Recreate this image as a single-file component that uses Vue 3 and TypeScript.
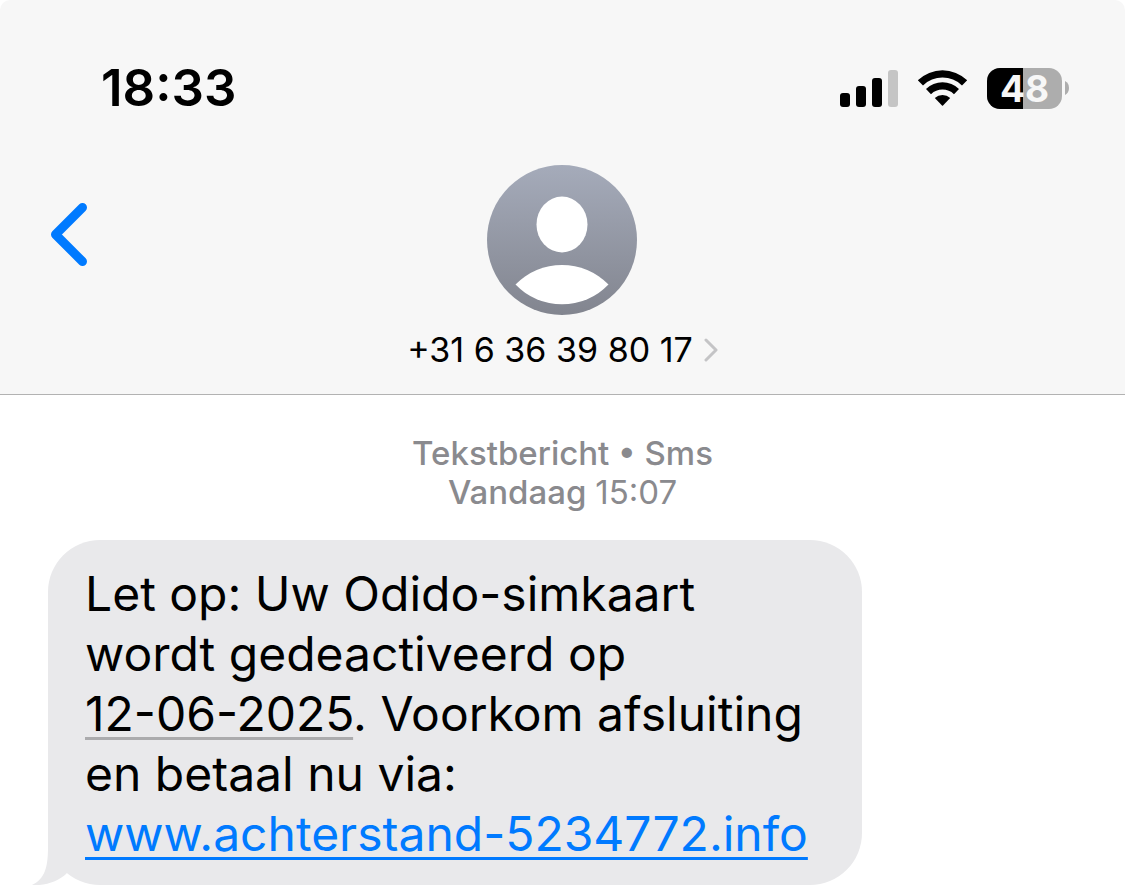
<script setup lang="ts">
interface SignalBar {
  x: number
  height: number
  active: boolean
}

const time = '18:33'
const battery = 48
const contact = '+31 6 36 39 80 17'

const bars: SignalBar[] = [
  { x: 0, height: 14, active: true },
  { x: 16, height: 21, active: true },
  { x: 32, height: 29, active: true },
  { x: 48, height: 37, active: false },
]
</script>

<template>
  <div class="screen">
    <header class="header">
      <div class="status">
        <time class="clock">{{ time }}</time>
        <div class="indicators">
          <svg class="signal" viewBox="0 0 58 37" aria-hidden="true">
            <rect
              v-for="bar in bars"
              :key="bar.x"
              :x="bar.x"
              :y="37 - bar.height"
              width="10"
              :height="bar.height"
              rx="3"
              :fill="bar.active ? '#000' : '#c5c5c5'"
            />
          </svg>
          <svg class="wifi" viewBox="0 0 51 38" aria-hidden="true">
            <path d="M0.8 11.2A35.800 35.800 0 0 1 50.200 11.2L45 16.400A28.200 28.200 0 0 0 6 16.400Z" />
            <path d="M9 19.900A23.800 23.800 0 0 1 42 19.900L37 25.200A16.600 16.600 0 0 0 14 25.200Z" />
            <path d="M17.800 29A11.400 11.400 0 0 1 33.200 29L26 36.400Q25.500 36.900 25 36.400Z" />
          </svg>
          <div class="battery">
            <div class="cell">
              <div class="charge" :style="{ width: battery + '%' }"></div>
              <span class="level">{{ battery }}</span>
            </div>
            <svg class="nub" viewBox="0 0 4 14" aria-hidden="true">
              <path d="M0 0Q4 2 4 7T0 14Z" fill="#adadad" />
            </svg>
          </div>
        </div>
      </div>

      <div class="nav">
        <button class="back" type="button" aria-label="Terug">
          <svg viewBox="0 0 38 64" aria-hidden="true">
            <path d="M32.5 4.5L5.5 31.5L32.5 58.5" />
          </svg>
        </button>
        <button class="contact" type="button">
          <svg class="avatar" viewBox="0 0 150 150" aria-hidden="true">
            <defs>
              <linearGradient id="avatar-fill" x1="0" y1="0" x2="0" y2="1">
                <stop offset="0" stop-color="#a5abba" />
                <stop offset="1" stop-color="#82858f" />
              </linearGradient>
            </defs>
            <circle cx="75" cy="75" r="75" fill="url(#avatar-fill)" />
            <ellipse cx="75" cy="59.5" rx="25.5" ry="28" fill="#fff" />
            <path d="M28.5 119.5A65 65 0 0 1 121.5 119.5A64.5 64.5 0 0 1 28.5 119.5Z" fill="#fff" />
          </svg>
          <span class="number">
            {{ contact }}
            <svg class="more" viewBox="0 0 14 24" aria-hidden="true">
              <path d="M2 2L12 12L2 22" />
            </svg>
          </span>
        </button>
      </div>
    </header>

    <main class="thread">
      <p class="stamp">
        Tekstbericht • Sms<br />Vandaag <span class="hour">15:07</span>
      </p>
      <div class="bubble">
        <svg class="tail" viewBox="0 0 48 52" aria-hidden="true">
          <path d="M16 0V14C16 34 13 46 0 52C14 53 27 48 35 40L48 20V0Z" />
        </svg>
        <p class="message">
          Let op: Uw Odido-simkaart<br />
          wordt gedeactiveerd op<br />
          <span class="date">12-06-2025</span>. Voorkom afsluiting<br />
          en betaal nu via:<br />
          <a class="link" href="#">www.achterstand-5234772.info</a>
        </p>
      </div>
    </main>
  </div>
</template>

<style>
body {
  margin: 0;
  background: #fff;
}
</style>

<style scoped>
.screen {
  font-family: Inter, "Liberation Sans", sans-serif;
  color: #000;
}

.header {
  box-sizing: border-box;
  padding: 58px 0 24px;
  background: #f7f7f7;
  border-bottom: 1px solid #b2b2b2;
  border-radius: 10px 10px 0 0;
}

.status {
  display: flex;
  align-items: center;
  justify-content: space-between;
  height: 60px;
  padding: 0 56px 0 101px;
}

.clock {
  font-size: 51px;
  line-height: 62px;
  font-weight: 600;
}

.indicators {
  display: flex;
  align-items: center;
  gap: 19px;
}

.signal {
  width: 58px;
  height: 37px;
}

.wifi {
  width: 51px;
  height: 38px;
}

.battery {
  display: flex;
  align-items: center;
  gap: 3px;
}

.cell {
  position: relative;
  width: 75px;
  height: 41px;
  border-radius: 13px;
  background: #adadad;
}

.charge {
  height: 100%;
  border-radius: 13px 0 0 13px;
  background: #000;
}

.level {
  position: absolute;
  inset: 0;
  font-size: 37px;
  line-height: 41px;
  font-weight: 700;
  text-align: center;
  color: #f7f7f7;
}

.nub {
  width: 4px;
  height: 14px;
}

.nav {
  display: grid;
  grid-template-columns: 1fr auto 1fr;
  align-items: start;
  padding: 47px 50px 0;
}

button {
  padding: 0;
  border: 0;
  background: none;
  font: inherit;
  color: inherit;
  cursor: pointer;
}

.back {
  justify-self: start;
  margin-top: 38px;
}

.back svg {
  display: block;
  width: 38px;
  height: 64px;
  fill: none;
  stroke: #007aff;
  stroke-width: 9;
  stroke-linecap: round;
  stroke-linejoin: round;
}

.contact {
  display: flex;
  flex-direction: column;
  align-items: center;
  gap: 15px;
}

.avatar {
  width: 150px;
  height: 150px;
}

.number {
  display: flex;
  align-items: center;
  gap: 11px;
  font-size: 34px;
  line-height: 40px;
}

.more {
  width: 14px;
  height: 24px;
  fill: none;
  stroke: #c4c4c6;
  stroke-width: 3;
  stroke-linecap: round;
  stroke-linejoin: round;
}

.thread {
  padding: 39px 48px 8px;
}

.stamp {
  margin: 0;
  font-size: 33px;
  line-height: 39px;
  font-weight: 500;
  text-align: center;
  color: #8a8a8e;
}

.hour {
  font-weight: 400;
}

.bubble {
  position: relative;
  box-sizing: border-box;
  width: fit-content;
  margin-top: 28px;
  padding: 24px 54px 21px 37px;
  border-radius: 52px;
  background: #e9e9eb;
}

.tail {
  position: absolute;
  left: -16px;
  bottom: 0;
  width: 48px;
  height: 52px;
  fill: #e9e9eb;
}

.message {
  position: relative;
  margin: 0;
  font-size: 48px;
  line-height: 60px;
  white-space: nowrap;
}

.date,
.link {
  text-decoration: underline;
  text-decoration-thickness: 3px;
  text-decoration-skip-ink: none;
  text-underline-offset: 6px;
}

.date {
  text-decoration-color: #ababad;
}

.link {
  color: #007aff;
}
</style>
